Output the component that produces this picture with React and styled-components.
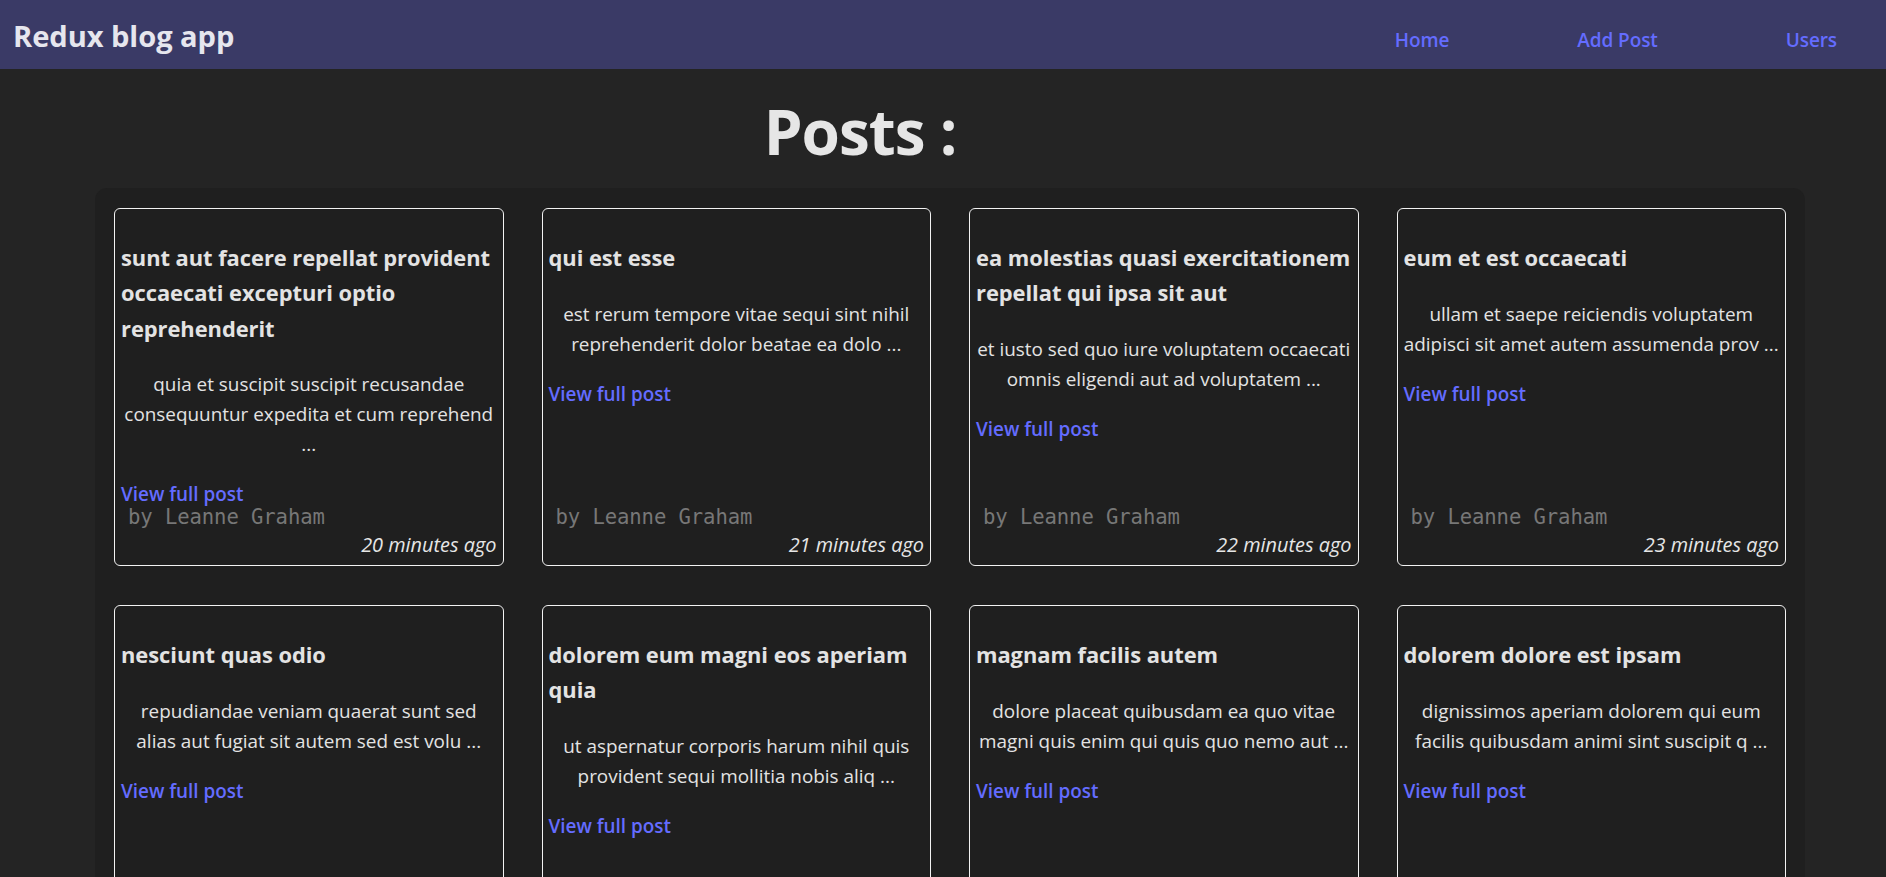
import React from "react";
import styled, { createGlobalStyle } from "styled-components";

const GlobalStyle = createGlobalStyle`
  html, body { margin: 0; padding: 0; }
  body {
    background: #242424;
    color: rgba(255, 255, 255, 0.87);
    font-family: "Open Sans", "Noto Sans", sans-serif;
    -webkit-font-smoothing: antialiased;
  }
  * { box-sizing: border-box; }
`;

const Header = styled.header`
  display: flex;
  align-items: center;
  justify-content: space-between;
  height: 69px;
  padding: 0 49px 0 13px;
  background: #3a3a66;
`;

const Brand = styled.h1`
  margin: 3px 0 0;
  font-size: 29.1px;
  font-weight: 700;
  color: #e6e6ee;
  letter-spacing: -0.05px;
`;

const Nav = styled.nav`
  display: flex;
  gap: 128px;
  padding-top: 10px;
`;

const NavLink = styled.a`
  font-size: 19px;
  font-weight: 600;
  color: #646cff;
  text-decoration: none;
  letter-spacing: -0.1px;
`;

const Main = styled.main`
  padding: 0 81px 0 95px;
`;

const PageTitle = styled.h1`
  margin: 28px 0 23px;
  padding-right: 180px;
  text-align: center;
  font-size: 62px;
  line-height: 68px;
  font-weight: 700;
  color: #e6e6e6;
  letter-spacing: -1px;
`;

const Panel = styled.section`
  display: grid;
  grid-template-columns: repeat(4, 1fr);
  column-gap: 38px;
  row-gap: 39px;
  padding: 20px 19px;
  background: #1f1f1f;
  border-radius: 12px;
`;

const Card = styled.article`
  display: flex;
  flex-direction: column;
  height: 358px;
  padding: 8px 6px 5px;
  border: 1px solid #f2f2f2;
  border-radius: 6px;
  background: #1f1f1f;
  font-size: 18.9px;
  line-height: 30px;
`;

const Title = styled.h3`
  margin: 23.4px 0;
  font-size: 21.9px;
  line-height: 35.1px;
  font-weight: 700;
  color: #e3e3e3;
  letter-spacing: -0.05px;
`;

const Excerpt = styled.p`
  margin: 0 0 23px;
  text-align: center;
  color: #e3e3e3;
  letter-spacing: 0;
`;

const ViewLink = styled.a`
  align-self: flex-start;
  font-weight: 600;
  line-height: 24px;
  color: #646cff;
  text-decoration: none;
  letter-spacing: 0;
`;

const Footer = styled.div`
  margin-top: auto;
  display: flex;
  flex-direction: column;
`;

const Author = styled.span`
  margin-bottom: 3.5px;
  padding-left: 7px;
  font-family: "DejaVu Sans Mono", "Liberation Mono", monospace;
  font-size: 20.6px;
  line-height: 20px;
  color: #777777;
  letter-spacing: -0.1px;
`;

const Time = styled.i`
  align-self: flex-end;
  font-size: 19.9px;
  font-style: italic;
  color: #e6e6e6;
  letter-spacing: 0;
`;

const posts = [
  {
    title: "sunt aut facere repellat provident occaecati excepturi optio reprehenderit",
    body: "quia et suscipit suscipit recusandae consequuntur expedita et cum reprehend ...",
    time: "20 minutes ago",
  },
  {
    title: "qui est esse",
    body: "est rerum tempore vitae sequi sint nihil reprehenderit dolor beatae ea dolo ...",
    time: "21 minutes ago",
  },
  {
    title: "ea molestias quasi exercitationem repellat qui ipsa sit aut",
    body: "et iusto sed quo iure voluptatem occaecati omnis eligendi aut ad voluptatem ...",
    time: "22 minutes ago",
  },
  {
    title: "eum et est occaecati",
    body: "ullam et saepe reiciendis voluptatem adipisci sit amet autem assumenda prov ...",
    time: "23 minutes ago",
  },
  {
    title: "nesciunt quas odio",
    body: "repudiandae veniam quaerat sunt sed alias aut fugiat sit autem sed est volu ...",
    time: "24 minutes ago",
  },
  {
    title: "dolorem eum magni eos aperiam quia",
    body: "ut aspernatur corporis harum nihil quis provident sequi mollitia nobis aliq ...",
    time: "25 minutes ago",
  },
  {
    title: "magnam facilis autem",
    body: "dolore placeat quibusdam ea quo vitae magni quis enim qui quis quo nemo aut ...",
    time: "26 minutes ago",
  },
  {
    title: "dolorem dolore est ipsam",
    body: "dignissimos aperiam dolorem qui eum facilis quibusdam animi sint suscipit q ...",
    time: "27 minutes ago",
  },
];

export default function App() {
  return (
    <>
      <GlobalStyle />
      <Header>
        <Brand>Redux blog app</Brand>
        <Nav>
          <NavLink href="#">Home</NavLink>
          <NavLink href="#">Add Post</NavLink>
          <NavLink href="#">Users</NavLink>
        </Nav>
      </Header>
      <Main>
        <PageTitle>Posts :</PageTitle>
        <Panel>
          {posts.map((p, i) => (
            <Card key={i}>
              <Title>{p.title}</Title>
              <Excerpt>{p.body}</Excerpt>
              <ViewLink href="#">View full post</ViewLink>
              <Footer>
                <Author>by Leanne Graham</Author>
                <Time>{p.time}</Time>
              </Footer>
            </Card>
          ))}
        </Panel>
      </Main>
    </>
  );
}
